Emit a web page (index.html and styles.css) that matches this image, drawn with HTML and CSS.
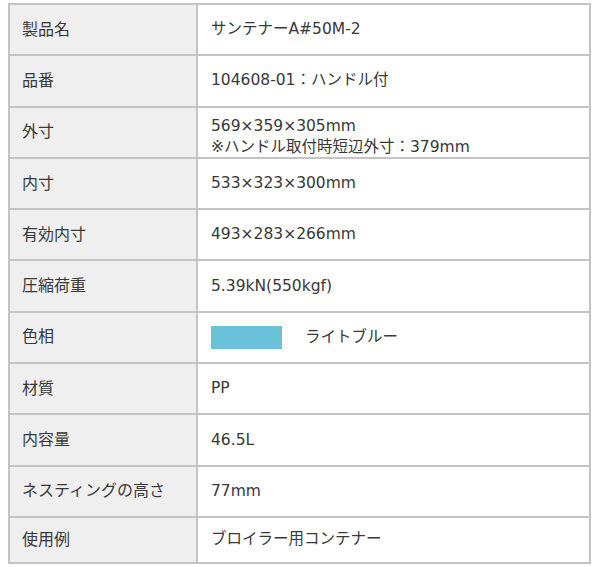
FILE: index.html
```html
<!DOCTYPE html>
<html lang="ja">
<head>
<meta charset="utf-8">
<link rel="stylesheet" href="styles.css">
</head>
<body>
<div class="spec">
  <div class="k">製品名</div><div class="v">サンテナーA#50M-2</div>
  <div class="k">品番</div><div class="v">104608-01：ハンドル付</div>
  <div class="k">外寸</div><div class="v two"><span>569×359×305mm</span><span>※ハンドル取付時短辺外寸：379mm</span></div>
  <div class="k">内寸</div><div class="v">533×323×300mm</div>
  <div class="k">有効内寸</div><div class="v">493×283×266mm</div>
  <div class="k">圧縮荷重</div><div class="v">5.39kN(550kgf)</div>
  <div class="k">色相</div><div class="v color"><span class="swatch"></span><span>ライトブルー</span></div>
  <div class="k">材質</div><div class="v">PP</div>
  <div class="k">内容量</div><div class="v">46.5L</div>
  <div class="k">ネスティングの高さ</div><div class="v">77mm</div>
  <div class="k">使用例</div><div class="v">ブロイラー用コンテナー</div>
</div>
</body>
</html>
```
FILE: styles.css
```css
html, body { margin: 0; padding: 0; background: #fff; }
body { padding: 3px 8px 0 8px; font-family: "DejaVu Sans", "Noto Sans CJK JP", sans-serif; color: #383838; font-size: 15.5px; }
.spec {
  width: 583px;
  box-sizing: border-box;
  display: grid;
  grid-template-columns: 188px 1fr;
  grid-template-rows: repeat(10, 51.3px) 46px;
  border-top: 2px solid #c4c4c4;
  border-left: 2px solid #c4c4c4;
}
.k, .v {
  border-right: 2px solid #c4c4c4;
  border-bottom: 2px solid #c4c4c4;
  display: flex;
  align-items: center;
  line-height: 20px;
}
.k { background: #efefef; font-family: "Noto Sans CJK JP", sans-serif; font-size: 16px; padding: 0 0 4px 12px; }
.v { padding: 0 0 1px 13px; }
.two { flex-direction: column; align-items: flex-start; justify-content: center; line-height: 21px; padding-top: 10px; padding-bottom: 0; }
.color { gap: 23px; }
.swatch { width: 71px; height: 23px; background: #6ac2d8; margin-top: 1px; }
```
